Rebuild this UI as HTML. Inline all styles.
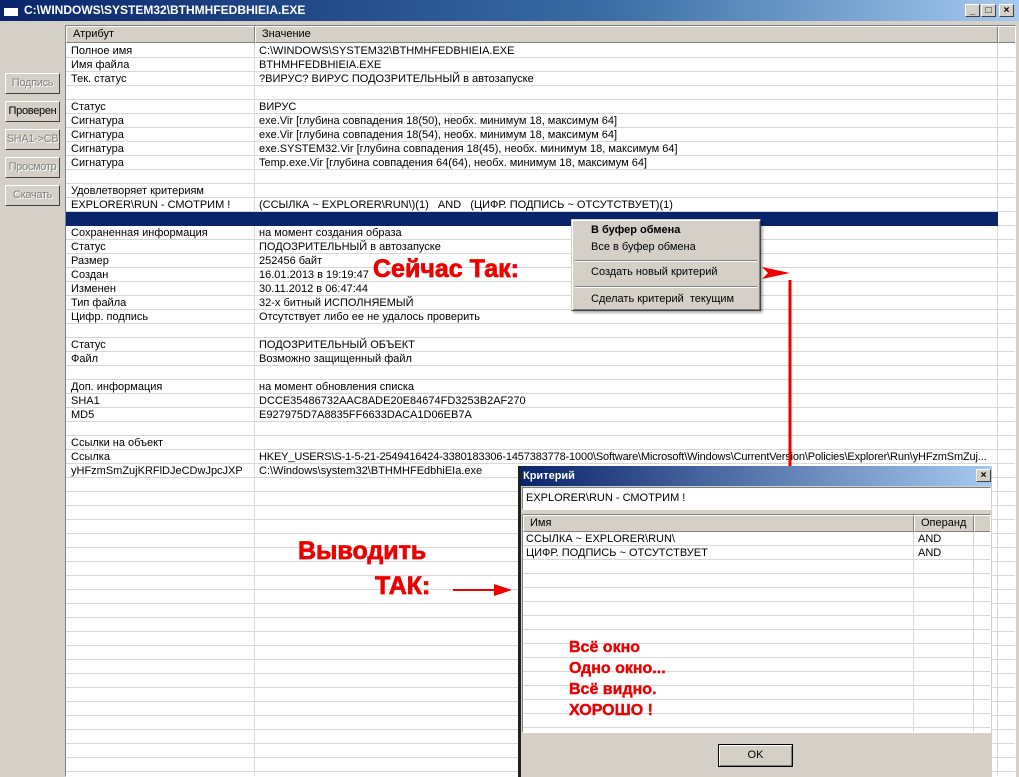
<!DOCTYPE html>
<html><head><meta charset="utf-8"><style>
*{margin:0;padding:0;box-sizing:border-box}
body{width:1019px;height:777px;overflow:hidden;background:#d4d0c8;font:11px "Liberation Sans","DejaVu Sans",sans-serif;color:#000;position:relative}
.abs{position:absolute}
.title{left:0;top:0;width:1019px;height:21px;background:linear-gradient(90deg,#0a246a 0%,#3a6ea5 60%,#a6caf0 100%);color:#fff;font-weight:bold;font-size:12px;line-height:21px;padding-left:24px}
.tb{top:4px;width:15px;height:13px;background:#d4d0c8;border:1px solid;border-color:#fff #404040 #404040 #fff;font-size:10px;line-height:11px;text-align:center;color:#000;font-weight:bold}
.btn{left:5px;width:55px;height:21px;border:1px solid;border-color:#fff #404040 #404040 #fff;text-align:center;line-height:19px;color:#808080;text-shadow:1px 1px #fff;white-space:nowrap;overflow:hidden;letter-spacing:-0.3px}
.grid{left:65px;top:25px;width:951px;height:752px;border:1px solid;border-color:#808080 #fff #fff #808080;background:#fff;overflow:hidden}
.hdr{top:0;height:17px;background:#d4d0c8;border:1px solid;border-color:#fff #808080 #808080 #fff;line-height:15px;padding-left:6px}
.lines{left:0;top:17px;right:0;bottom:0;background:repeating-linear-gradient(180deg,transparent 0 13px,#d8d8d8 13px 14px)}
.vl{top:17px;bottom:0;width:1px;background:#d8d8d8}
.r{position:absolute;height:14px;line-height:14px;white-space:nowrap}
.red{color:#e00;font-weight:bold;font-family:"Liberation Sans",sans-serif;-webkit-text-stroke:0.7px #e00}
.menu{left:571px;top:219px;width:190px;height:92px;background:#d4d0c8;border:1px solid;border-color:#d4d0c8 #404040 #404040 #d4d0c8;box-shadow:inset 1px 1px #fff,inset -1px -1px #808080,2px 2px 2px rgba(0,0,0,.3)}
.mi{position:absolute;left:19px}
.sep{position:absolute;left:3px;right:3px;height:2px;border-top:1px solid #808080;border-bottom:1px solid #fff}
</style></head><body>
<div class="abs title"><span class="abs" style="left:4px;top:5px;width:14px;height:11px;background:#fff;border-top:3px solid #0a246a"></span>C:\WINDOWS\SYSTEM32\BTHMHFEDBHIEIA.EXE</div>
<div class="abs tb" style="left:965px">_</div><div class="abs tb" style="left:981px">□</div><div class="abs tb" style="left:999px">×</div>

<div class="abs btn" style="top:73px">Подпись</div>
<div class="abs btn" style="top:101px;color:#000;text-shadow:none">Проверен</div>
<div class="abs btn" style="top:129px">SHA1-&gt;CB</div>
<div class="abs btn" style="top:157px">Просмотр</div>
<div class="abs btn" style="top:185px">Скачать</div>

<div class="abs grid">
<div class="abs hdr" style="left:0;width:189px">Атрибут</div>
<div class="abs hdr" style="left:189px;width:743px">Значение</div>
<div class="abs hdr" style="left:932px;width:20px"></div>
<div class="abs lines" style="top:18px"></div>
<div class="abs vl" style="left:188px"></div>
<div class="abs vl" style="left:931px"></div>
<div class="abs" style="left:0;top:186px;width:932px;height:14px;background:#0a246a"></div>
<div style="position:absolute;left:5px;top:18px">
<div class="r" style="top:0">Полное имя</div>
<div class="r" style="top:14px">Имя файла</div>
<div class="r" style="top:28px">Тек. статус</div>
<div class="r" style="top:56px">Статус</div>
<div class="r" style="top:70px">Сигнатура</div>
<div class="r" style="top:84px">Сигнатура</div>
<div class="r" style="top:98px">Сигнатура</div>
<div class="r" style="top:112px">Сигнатура</div>
<div class="r" style="top:140px">Удовлетворяет критериям</div>
<div class="r" style="top:154px">EXPLORER\RUN - СМОТРИМ !</div>
<div class="r" style="top:182px">Сохраненная информация</div>
<div class="r" style="top:196px">Статус</div>
<div class="r" style="top:210px">Размер</div>
<div class="r" style="top:224px">Создан</div>
<div class="r" style="top:238px">Изменен</div>
<div class="r" style="top:252px">Тип файла</div>
<div class="r" style="top:266px">Цифр. подпись</div>
<div class="r" style="top:294px">Статус</div>
<div class="r" style="top:308px">Файл</div>
<div class="r" style="top:336px">Доп. информация</div>
<div class="r" style="top:350px">SHA1</div>
<div class="r" style="top:364px">MD5</div>
<div class="r" style="top:392px">Ссылки на объект</div>
<div class="r" style="top:406px">Ссылка</div>
<div class="r" style="top:420px">yHFzmSmZujKRFlDJeCDwJpcJXP</div>
</div>
<div style="position:absolute;left:193px;top:18px">
<div class="r" style="top:0">C:\WINDOWS\SYSTEM32\BTHMHFEDBHIEIA.EXE</div>
<div class="r" style="top:14px">BTHMHFEDBHIEIA.EXE</div>
<div class="r" style="top:28px">?ВИРУС? ВИРУС ПОДОЗРИТЕЛЬНЫЙ в автозапуске</div>
<div class="r" style="top:56px">ВИРУС</div>
<div class="r" style="top:70px">exe.Vir [глубина совпадения 18(50), необх. минимум 18, максимум 64]</div>
<div class="r" style="top:84px">exe.Vir [глубина совпадения 18(54), необх. минимум 18, максимум 64]</div>
<div class="r" style="top:98px">exe.SYSTEM32.Vir [глубина совпадения 18(45), необх. минимум 18, максимум 64]</div>
<div class="r" style="top:112px">Temp.exe.Vir [глубина совпадения 64(64), необх. минимум 18, максимум 64]</div>
<div class="r" style="top:154px">(ССЫЛКА ~ EXPLORER\RUN\)(1) &nbsp; AND &nbsp; (ЦИФР. ПОДПИСЬ ~ ОТСУТСТВУЕТ)(1)</div>
<div class="r" style="top:182px">на момент создания образа</div>
<div class="r" style="top:196px">ПОДОЗРИТЕЛЬНЫЙ в автозапуске</div>
<div class="r" style="top:210px">252456 байт</div>
<div class="r" style="top:224px">16.01.2013 в 19:19:47</div>
<div class="r" style="top:238px">30.11.2012 в 06:47:44</div>
<div class="r" style="top:252px">32-х битный ИСПОЛНЯЕМЫЙ</div>
<div class="r" style="top:266px">Отсутствует либо ее не удалось проверить</div>
<div class="r" style="top:294px">ПОДОЗРИТЕЛЬНЫЙ ОБЪЕКТ</div>
<div class="r" style="top:308px">Возможно защищенный файл</div>
<div class="r" style="top:336px">на момент обновления списка</div>
<div class="r" style="top:350px">DCCE35486732AAC8ADE20E84674FD3253B2AF270</div>
<div class="r" style="top:364px">E927975D7A8835FF6633DACA1D06EB7A</div>
<div class="r" style="top:406px;letter-spacing:-0.15px">HKEY_USERS\S-1-5-21-2549416424-3380183306-1457383778-1000\Software\Microsoft\Windows\CurrentVersion\Policies\Explorer\Run\yHFzmSmZuj...</div>
<div class="r" style="top:420px">C:\Windows\system32\BTHMHFEdbhiEIa.exe</div>
</div>
</div>

<div class="abs red" style="left:373px;top:255px;font-size:25px">Сейчас Так:</div>
<div class="abs red" style="left:298px;top:537px;font-size:25px">Выводить</div>
<div class="abs red" style="left:375px;top:572px;font-size:25px">ТАК:</div>

<svg class="abs" style="left:0;top:0" width="1019" height="777">
<line x1="453" y1="590" x2="495" y2="590" stroke="#e00" stroke-width="2"/>
<polygon points="494,584 512,590 494,596" fill="#e00"/>
<polygon points="762,267 790,273 762,279 768,273" fill="#e00"/>
<line x1="790" y1="280" x2="790" y2="470" stroke="#e00" stroke-width="3"/>
<polygon points="784,468 796,468 790,488" fill="#e00"/>
</svg>

<div class="abs menu">
<div class="mi" style="top:4px;font-weight:bold">В буфер обмена</div>
<div class="mi" style="top:21px">Все в буфер обмена</div>
<div class="sep" style="top:40px"></div>
<div class="mi" style="top:46px">Создать новый критерий</div>
<div class="sep" style="top:66px"></div>
<div class="mi" style="top:73px">Сделать критерий &nbsp;текущим</div>
</div>

<div class="abs" style="left:518px;top:466px;width:474px;height:311px;background:#d4d0c8;border-left:3px solid #202020">
<div class="abs" style="left:0;top:0;width:471px;height:20px;background:linear-gradient(90deg,#0a246a,#a6caf0);color:#fff;font-weight:bold;line-height:20px;padding-left:2px">Критерий</div>
<div class="abs tb" style="left:455px;top:3px">×</div>
<div class="abs" style="left:1px;top:21px;width:469px;height:23px;background:#fff;border:1px solid;border-color:#808080 #fff #fff #808080;line-height:20px;padding-left:3px">EXPLORER\RUN - СМОТРИМ !</div>
<div class="abs" style="left:1px;top:48px;width:469px;height:219px;background:#fff;border:1px solid;border-color:#808080 #fff #fff #808080;overflow:hidden">
<div class="abs hdr" style="left:0;width:391px;font-size:11px">Имя</div>
<div class="abs hdr" style="left:391px;width:60px">Операнд</div>
<div class="abs hdr" style="left:451px;width:20px"></div>
<div class="abs lines"></div>
<div class="abs vl" style="left:390px"></div>
<div class="abs vl" style="left:450px"></div>
<div class="r" style="left:3px;top:17px">ССЫЛКА ~ EXPLORER\RUN\</div>
<div class="r" style="left:395px;top:17px">AND</div>
<div class="r" style="left:3px;top:31px">ЦИФР. ПОДПИСЬ ~ ОТСУТСТВУЕТ</div>
<div class="r" style="left:395px;top:31px">AND</div>
<div class="abs red" style="left:46px;top:122px;font-size:16px;line-height:21px;-webkit-text-stroke:0.4px #e00">Всё окно<br>Одно окно...<br>Всё видно.<br>ХОРОШО !</div>
</div>
<div class="abs" style="left:197px;top:278px;width:75px;height:23px;border:1px solid #000;box-shadow:inset 1px 1px #fff,inset -1px -1px #808080;text-align:center;line-height:21px">OK</div>
</div>
</body></html>
